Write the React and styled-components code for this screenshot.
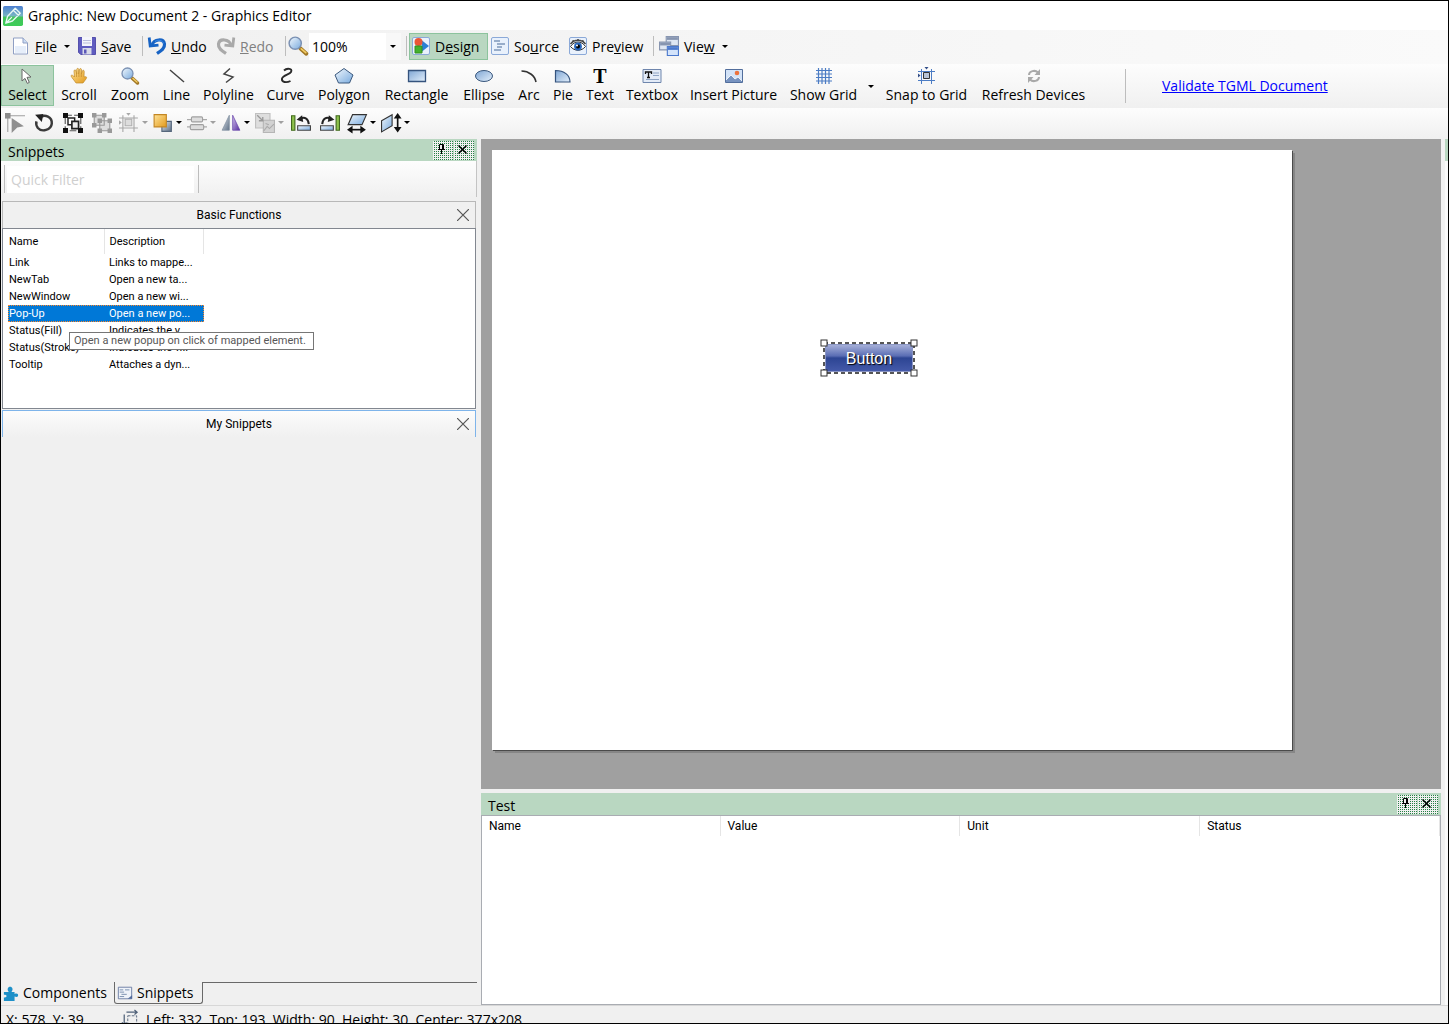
import { Fragment } from "react";
import styled, { createGlobalStyle, css } from "styled-components";

const GlobalStyle = createGlobalStyle`
  * {
    box-sizing: border-box;
  }

  body {
    margin: 0;
    background-color: #f0f0f0;
    font-family: "Open Sans", "Noto Sans", sans-serif;
    font-size: 14px;
    line-height: 20px;
    color: #000;
  }

  button,
  input,
  select {
    font: inherit;
    color: inherit;
    border: 0;
    margin: 0;
    padding: 0;
    border-radius: 0;
    background: none;
    outline: none;
  }

  h1,
  h2 {
    margin: 0;
    font: inherit;
  }

  table {
    border-collapse: collapse;
    border-spacing: 0;
  }
`;

const Window = styled.div`
  display: flex;
  flex-direction: column;
  height: 100vh;
  min-height: 600px;
  border: 1px solid #000;
  overflow: hidden;
`;

const TitleBar = styled.header`
  display: flex;
  align-items: center;
  gap: 5px;
  flex: none;
  height: 29px;
  padding-left: 2px;
  background-color: #fff;
`;

const MenuBar = styled.nav`
  display: flex;
  align-items: center;
  flex: none;
  height: 34px;
  padding: 0 0 2px 8px;
  background: linear-gradient(to right, #f0f0f0, #fafafa);
`;

const MenuButton = styled.button`
  display: flex;
  align-items: center;
  gap: 5px;
  flex: none;
  width: ${(props) => props.$width}px;
  height: 27px;
  padding: 0 3px;
  white-space: nowrap;

  &:disabled {
    color: #808080;
  }

  ${(props) =>
    props.$active &&
    css`
      background-color: #b9d7c1;
      box-shadow: inset 0 0 0 1px #8cc39d;
    `}
`;

const MenuLabel = styled.span`
  padding: 2px 2px 0 0;
`;

const Separator = styled.span`
  flex: none;
  width: 3px;
  height: ${(props) => props.$height || 20}px;
  border-left: 1px solid #bdbdbd;
`;

const Arrow = styled.span`
  flex: none;
  border: 3px solid transparent;
  border-top-color: ${(props) => (props.$muted ? "#a0a0a0" : "#000")};
  border-bottom: 0;
`;

const ZoomField = styled.label`
  display: flex;
  align-items: center;
  flex: none;
  gap: 1px;
  width: 118px;
`;

const ZoomBox = styled.span`
  display: flex;
  align-items: center;
  width: 92px;
  height: 27px;
  padding-right: 5px;
  background: linear-gradient(to right, #fff 77px, #f8f8f8 77px);
`;

const ZoomSelect = styled.select`
  appearance: none;
  flex: 1;
  min-width: 0;
  height: 27px;
  padding: 2px 0 0 3px;
`;

const ToolBar = styled.div`
  display: flex;
  align-items: center;
  flex: none;
  height: ${(props) => props.$height}px;
  background: linear-gradient(#fdfdfd, #f0f0f0);
`;

const ToolButton = styled.button`
  display: flex;
  flex-direction: column;
  align-items: center;
  flex: none;
  width: ${(props) => props.$width}px;
  height: 41px;
  padding-top: 2px;
  margin-bottom: 2px;
  white-space: nowrap;

  ${(props) =>
    props.$active &&
    css`
      background-color: #b9d7c1;
      box-shadow: inset 0 0 0 1px #8cc39d;
    `}
`;

const ArrowButton = styled.button`
  display: flex;
  justify-content: center;
  width: 14px;
`;

const ValidateArea = styled.div`
  display: flex;
  align-items: center;
  gap: 34px;
  margin-left: 33px;
`;

const ValidateLink = styled.a`
  color: #0000ff;
  white-space: nowrap;
`;

const IconButton = styled.button`
  display: flex;
  align-items: center;
  flex: none;
  gap: 3px;
  width: ${(props) => (props.$menu ? 34 : 29)}px;
  height: 29px;
  padding: 0 0 2px ${(props) => (props.$menu ? 2 : 4)}px;
`;

const Workspace = styled.main`
  display: flex;
  gap: 4px;
  flex: 1;
  min-height: 0;
`;

const Sidebar = styled.aside`
  display: flex;
  flex-direction: column;
  flex: none;
  width: 476px;
`;

const PanelHeader = styled.header`
  display: flex;
  align-items: center;
  flex: none;
  gap: 1px;
  height: 22px;
  padding: 0 3px 0 7px;
  background-color: #b9d7c1;
`;

const PanelTitle = styled.h2`
  flex: 1;
  padding-top: 4px;
`;

const PanelButton = styled.button`
  width: 20px;
  height: 19px;
  background: conic-gradient(#278045 25%, #f0f0f0 0) 0 0 / 2px 2px;

  svg {
    display: block;
  }
`;

const FilterBar = styled.div`
  display: flex;
  align-items: center;
  flex: none;
  height: 36px;
  padding-left: 3px;
  border-right: 1px solid #c4c4c4;
  background: linear-gradient(#fdfdfd, #f0f0f0);
`;

const FilterInput = styled.input`
  width: 187px;
  height: 27px;
  margin-right: 4px;
  padding-left: 4px;
  background-color: #fff;

  &::placeholder {
    color: #cfcfcf;
    opacity: 1;
  }
`;

const SnippetGroups = styled.div`
  flex: 1;
  padding: 4px 1px 0;
  font-family: Roboto, "Noto Sans", sans-serif;
  font-size: 11px;
  line-height: 17px;
`;

const GroupHeader = styled.header`
  display: flex;
  align-items: center;
  height: 27px;
  padding: 0 6px 0 18px;
  border: 1px solid ${(props) => (props.$focused ? "#7eb4ea" : "#b8b8b8")};
  border-bottom: 0;
  background: ${(props) =>
    props.$focused ? "linear-gradient(#fcfcfc, #f0f0f0)" : "#f0f0f0"};
`;

const GroupTitle = styled.h2`
  flex: 1;
  font-size: 12px;
  text-align: center;
`;

const CloseButton = styled.button`
  width: 12px;
  height: 12px;

  svg {
    display: block;
  }
`;

const SnippetList = styled.div`
  position: relative;
  height: 181px;
  margin-bottom: 1px;
  padding-left: 5px;
  border: 1px solid #828790;
  background-color: #fff;
`;

const SnippetTable = styled.table`
  table-layout: fixed;
  width: 196px;

  th {
    height: 25px;
    padding: 0 0 0 5px;
    border-right: 1px solid #e5e5e5;
    font-weight: normal;
    text-align: left;
  }

  th:first-child,
  td:first-child {
    width: 96px;
    padding-left: 1px;
  }
`;

const SnippetRow = styled.tr`
  height: 17px;

  td {
    padding: 0 0 0 5px;
    overflow: hidden;
    white-space: nowrap;
  }

  ${(props) =>
    props.$selected &&
    css`
      color: #fff;
      background-color: #0078d7;
      outline: 1px dotted #ff8728;
      outline-offset: -1px;
    `}
`;

const Tooltip = styled.div`
  position: absolute;
  top: 103px;
  left: 66px;
  height: 18px;
  padding: 0 7px 0 4px;
  border: 1px solid #767676;
  background-color: #fff;
  color: #575757;
  line-height: 16px;
  white-space: nowrap;
`;

const Tabs = styled.div`
  display: flex;
  flex: none;
  height: 23px;

  &::after {
    content: "";
    flex: 1;
    border-top: 1px solid #696969;
  }
`;

const Tab = styled.button`
  display: flex;
  align-items: center;
  gap: 4px;
  height: 22px;
  width: ${(props) => props.$width}px;
  padding-left: 2px;
  white-space: nowrap;

  ${(props) =>
    props.$active &&
    css`
      border: 1px solid #696969;
      border-top: 0;
      border-radius: 0 0 3px 3px;
    `}
`;

const Content = styled.section`
  display: flex;
  flex-direction: column;
  gap: 4px;
  flex: 1;
  min-width: 0;
`;

const Canvas = styled.div`
  flex: 1;
  min-height: 0;
  padding: 11px;
  background-color: #a0a0a0;
  overflow: hidden;
`;

const Page = styled.div`
  position: relative;
  width: 800px;
  height: 600px;
  background-color: #fff;
  box-shadow: 1px 1px 0 #4a4a4a, 3px 3px 0 #868686;
`;

const Shape = styled.div`
  position: absolute;
  top: 193px;
  left: 332px;
  width: 90px;
  height: 30px;
`;

const ShapeButton = styled.button`
  width: 90px;
  height: 30px;
  padding-top: 2px;
  border: 2px solid #8b96c5;
  background: linear-gradient(#a5afd8, #5a6db4 42%, #2d4593 50%, #4459a9);
  color: #fff;
  font-family: "Liberation Sans", sans-serif;
  font-size: 16px;
  line-height: 24px;
  text-shadow: 1px 1px 1px #000;
`;

const Selection = styled.svg`
  position: absolute;
  top: -4px;
  left: -4px;
`;

const TestPanel = styled.section`
  display: flex;
  flex-direction: column;
  flex: none;
  height: 212px;
`;

const TestGrid = styled.div`
  flex: 1;
  border: 1px solid #a9acb2;
  background-color: #fff;
`;

const TestTable = styled.table`
  table-layout: fixed;
  width: 100%;
  font-family: Roboto, "Noto Sans", sans-serif;
  font-size: 12px;
  line-height: 18px;

  th {
    height: 20px;
    padding: 0 7px;
    border-right: 1px solid #e5e5e5;
    font-weight: normal;
    text-align: left;
  }

  th:first-child {
    width: 238px;
  }
`;

const DockStrip = styled.div`
  flex: none;
  width: 3px;
  border-top: 22px solid #b9d7c1;
  background-color: #fafafa;
`;

const StatusBar = styled.footer`
  display: flex;
  flex: none;
  gap: 8px;
  height: 18px;
  padding: 4px 5px 0;
  border-top: 1px solid #d7d7d7;
  overflow: hidden;
  white-space: nowrap;
`;

const Coordinates = styled.span`
  width: 108px;
`;

const IconSvg = styled.svg`
  flex: none;
  display: block;
  overflow: visible;
`;

const Icon = ({ size = 18, children }) => (
  <IconSvg width={size} height={size} viewBox="0 0 18 18" fill="none" aria-hidden="true">
    {children}
  </IconSvg>
);

const GradientDefs = styled.svg`
  position: absolute;
`;

const Gradients = () => (
  <GradientDefs width="0" height="0" aria-hidden="true">
    <defs>
      <linearGradient id="blue" x1="0" y1="0" x2="1" y2="1">
        <stop stopColor="#f2f8fd" />
        <stop offset="1" stopColor="#78aade" />
      </linearGradient>
      <linearGradient id="steel" x1="0" y1="0" x2="1" y2="1">
        <stop stopColor="#7fa6d4" />
        <stop offset="1" stopColor="#e3effb" />
      </linearGradient>
      <linearGradient id="gold" x1="0" y1="0" x2="1" y2="1">
        <stop stopColor="#ffe49a" />
        <stop offset="1" stopColor="#e29a1c" />
      </linearGradient>
      <linearGradient id="slate" x1="0" y1="0" x2="1" y2="1">
        <stop stopColor="#e2e8ee" />
        <stop offset="1" stopColor="#5e7086" />
      </linearGradient>
      <linearGradient id="violet" x1="0" y1="0" x2="1" y2="1">
        <stop stopColor="#d5c4ef" />
        <stop offset="1" stopColor="#552c9c" />
      </linearGradient>
      <linearGradient id="app" x1="0" y1="0" x2="0" y2="1">
        <stop stopColor="#4b7ed0" />
        <stop offset="0.5" stopColor="#78b6c4" />
        <stop offset="0.55" stopColor="#43c35c" />
        <stop offset="1" stopColor="#3dcd58" />
      </linearGradient>
    </defs>
  </GradientDefs>
);

const AppIcon = () => (
  <Icon size={20}>
    <rect width="18" height="18" rx="1.5" fill="url(#app)" />
    <path
      d="M2.500 15.500l1.500-6 7-7.500 4.500 4.500-7 7-6 2zM2.500 15.500L8 10M9.500 4l4.500 4.500"
      stroke="#e8f8f4"
      strokeWidth="1.200"
      strokeLinejoin="round"
    />
  </Icon>
);

const FileIcon = () => (
  <Icon>
    <path d="M1.500 1h9.500l4.500 5v11h-14V1z" fill="#fff" stroke="#8f9fc4" />
    <path d="M3 9h11v7H3z" fill="#e6eefa" />
    <path d="M11 1v5h4.500" fill="#cbdcf4" stroke="#8f9fc4" />
  </Icon>
);

const SaveIcon = () => (
  <Icon>
    <path d="M.5.5h17v17H3l-2.500-2V.5z" fill="#5f5cc0" stroke="#5550ac" />
    <path d="M4 0h10v9H4z" fill="#f4f5fb" />
    <path d="M5 3.500h8M5 6h8" stroke="#b9bcda" />
    <path d="M4.500 11h9v6.500h-9z" fill="#d9dbe8" />
    <path d="M6 12.500h2.500v4H6z" fill="#5b57b8" />
  </Icon>
);

const UndoIcon = () => (
  <Icon>
    <path
      d="M4 8c2-6 11.500-7 12.500-1 .6 4.500-3.500 7-7.500 9.500"
      stroke="#1763c4"
      strokeWidth="3.200"
    />
    <path d="M1.200.5l1 8.500 8.300-.8" stroke="#1763c4" strokeWidth="2.800" />
    <path d="M7 4.500c3-2 7.500-1.500 8.500 2" stroke="#3f8be6" />
  </Icon>
);

const RedoIcon = () => (
  <Icon>
    <path
      d="M14 8C12 2 2.500 1 1.500 7c-.6 4.500 3.500 7 7.500 9.500"
      stroke="#a9a9a9"
      strokeWidth="3.200"
    />
    <path d="M16.800.5l-1 8.500-8.300-.8" stroke="#a9a9a9" strokeWidth="2.800" />
  </Icon>
);

const ZoomIcon = ({ size }) => (
  <Icon size={size}>
    <path d="M11 11l5.500 5" stroke="#a17724" strokeWidth="3.500" strokeLinecap="round" />
    <path d="M12 11.500l4 3.500" stroke="#f3cd65" strokeWidth="1.500" strokeLinecap="round" />
    <circle cx="6.500" cy="6.500" r="5.500" fill="url(#blue)" stroke="#7b91b3" strokeWidth="1.300" />
  </Icon>
);

const Frame = () => (
  <rect x="0.500" y="0.500" width="17" height="17" rx="1.500" fill="#e9f1fc" stroke="#8ba9d8" />
);

const DesignIcon = () => (
  <Icon>
    <Frame />
    <path d="M10 3.500l7 5.500-7 5.500z" fill="#2b7fd4" />
    <circle cx="6.500" cy="5" r="4" fill="#ea5636" />
    <path d="M3 9h7v7H3z" fill="#44b12d" stroke="#2f8f1d" />
  </Icon>
);

const SourceIcon = () => (
  <Icon>
    <Frame />
    <path d="M3 4h6M6 7h8M6 10h5M3 13h7" stroke="#7d97b9" strokeWidth="1.500" />
  </Icon>
);

const PreviewIcon = () => (
  <Icon>
    <Frame />
    <path d="M1.500 9.500c4-6 11-6 15 0-4 5-11 5-15 0z" fill="#fff" stroke="#333" />
    <circle cx="9" cy="9.500" r="3.900" fill="#2565bd" />
    <circle cx="9" cy="9.500" r="2" fill="#000" />
    <circle cx="8" cy="8.500" r="1" fill="#fff" />
    <path
      d="M1.500 7c4-5 11-5 15 0M3.500 3.500l1 1.500M9 2v2M14.500 3.500l-1 1.500"
      stroke="#444"
      strokeWidth="1.500"
    />
  </Icon>
);

const ViewIcon = () => (
  <Icon size={20}>
    <path d="M6.500.5h11v8h-11z" fill="#dfe7f3" stroke="#8795b0" />
    <path d="M7 1h10v2.500H7z" fill="#8795b0" />
    <path d="M.5 5.500h10v7H.5z" fill="#dfe7f3" stroke="#8795b0" />
    <path d="M1 6h9v2.500H1z" fill="#8795b0" />
    <path d="M7.500 9.500h10v8h-10z" fill="#d4e4fb" stroke="#4b79cd" />
    <path d="M8 10h9v2.500H8z" fill="#4b79cd" />
  </Icon>
);

const SelectIcon = () => (
  <Icon>
    <path
      d="M3 2l9 8-4 .4 2.300 5-2 1-2.300-5L3 14V2z"
      fill="#fff"
      stroke="#666"
      strokeLinejoin="round"
    />
  </Icon>
);

const HandIcon = () => (
  <Icon>
    <path
      d="M6 16C4 13 2 11 1 9c0-1.500 2-1 3.500 1L4 4c0-1.500 2-1.500 2 0l.7 3V2.500c0-1.500 2-1.500 2 0V7l.8-4.500c.2-1.400 2-1.200 2 .3L11.300 7l1-3c.5-1.300 2-.8 1.900.4L14 10c3-1 3 .5 2 2l-3 4H6z"
      fill="url(#gold)"
      stroke="#c08a28"
      strokeWidth="0.700"
    />
    <path d="M6.500 7v3M8.900 7v3M11.300 7v3" stroke="#b87f24" strokeWidth="0.600" />
  </Icon>
);

const LineIcon = () => (
  <Icon>
    <path d="M2 3l14 12" stroke="#444" strokeWidth="1.500" />
  </Icon>
);

const PolylineIcon = () => (
  <Icon>
    <path d="M10 1.500L4 7l9 3-7 5.500" stroke="#444" strokeWidth="1.500" />
  </Icon>
);

const CurveIcon = () => (
  <Icon>
    <path
      d="M7 3.500c3-3 9-2 7 1.500-1.500 2.500-8 3-9 6.500-.8 4 4.500 4.500 8.500 2.500"
      stroke="#2a2a2a"
      strokeWidth="1.900"
    />
  </Icon>
);

const PolygonIcon = () => (
  <Icon>
    <path d="M9 1.500l9 6.500-3.500 8h-11L0 8l9-6.500z" fill="url(#blue)" stroke="#3b587d" />
  </Icon>
);

const RectangleIcon = () => (
  <Icon>
    <path d="M.5 3.500h17v11H.5z" fill="url(#steel)" stroke="#35537d" strokeWidth="1.300" />
  </Icon>
);

const EllipseIcon = () => (
  <Icon>
    <ellipse cx="9" cy="9" rx="8.500" ry="5.500" fill="url(#steel)" stroke="#3b587d" />
  </Icon>
);

const ArcIcon = () => (
  <Icon>
    <path d="M1.500 4C9 4 15 9 16 15" stroke="#333" strokeWidth="1.600" />
  </Icon>
);

const PieIcon = () => (
  <Icon>
    <path
      d="M1.500 3.500v11.500H16c0-7-6-11.500-14.500-11.500z"
      fill="url(#steel)"
      stroke="#35537d"
      strokeWidth="1.200"
    />
  </Icon>
);

const Letter = styled.span`
  height: 18px;
  font-family: "Liberation Serif", serif;
  font-size: 20px;
  font-weight: bold;
  line-height: 18px;
`;

const TextboxIcon = () => (
  <Icon>
    <path d="M0 2.500h18v13H0z" fill="#e3ebf7" stroke="#6f86ad" />
    <path d="M10 6h6M10 8.500h6M3 12.500h13" stroke="#8fa4c4" />
    <path d="M2.500 7V5h6v2M5.500 5v5.500M4 10.500h3" stroke="#111" strokeWidth="1.300" />
  </Icon>
);

const PictureIcon = () => (
  <Icon>
    <path d="M.5 2.500h17v13H.5z" fill="#d3e3f8" stroke="#526e9c" />
    <circle cx="12" cy="6" r="2.300" fill="#ed733e" />
    <path d="M1 13l5-5 4 4 3-2 4 4v1H1z" fill="#7793c0" />
    <path d="M1 13l5-5 4 4 3-2 4 4" stroke="#fff" strokeWidth="0.800" />
  </Icon>
);

const GridIcon = () => (
  <Icon>
    <path
      d="M3.500 1v16M7 1v16M10.500 1v16M14 1v16M1 3.500h16M1 7h16M1 10.500h16M1 14h16"
      stroke="#4c7cc4"
      strokeWidth="1.200"
    />
  </Icon>
);

const SnapIcon = ({ muted, size }) => (
  <Icon size={size}>
    <path d="M3.500 2v15M13.500 2v15M0 4.500h17M0 13.500h17" stroke={muted ? "#a8a8a8" : "#4c7cc4"} />
    <path
      d="M5.500 5.500h6v6h-6z"
      fill={muted ? "#ddd" : "#b8c3d4"}
      stroke={muted ? "#b0b0b0" : "#333"}
    />
    <path d="M6.500 0h4l-2 2.500zM0 6.500v4L2.500 8.500z" fill={muted ? "#a8a8a8" : "#34508a"} />
  </Icon>
);

const RefreshIcon = () => (
  <Icon>
    <path d="M4 8c0-4 6-5.500 9-2.500M14 10c0 4-6 5.500-9 2.500" stroke="#a9a9a9" strokeWidth="2" />
    <path d="M15 2v6H9.500zM3 16v-6h5.500z" fill="#a9a9a9" />
  </Icon>
);

const NodeIcon = () => (
  <Icon size={20}>
    <path d="M4 2.500h14M2.500 4v13" stroke="#a0a0a0" />
    <path d="M0 0h5v5H0z" fill="#8c8c8c" />
    <path d="M6 4.500l11 7.500-6 1-5 5V4.500z" fill="#8f8f8f" />
  </Icon>
);

const RotateIcon = () => (
  <Icon size={20}>
    <path
      d="M5 4c5-3.500 11.500-.5 11 5.500-.6 6-9 8-12.500 4-1.500-2-1.800-4-1.300-6"
      stroke="#3a3a3a"
      strokeWidth="2.200"
    />
    <path d="M1 1.500L8.500 1 7 8z" fill="#222" />
  </Icon>
);

const GroupIcon = () => (
  <Icon size={20}>
    <path d="M2 2h14v14H2z" stroke="#555" strokeDasharray="6 2" />
    <path d="M4.500 4.500h6v6h-6z" fill="#fff" stroke="#222" strokeWidth="1.300" />
    <path d="M8 7.500h6v6.500H8z" fill="#eee" stroke="#222" strokeWidth="1.500" />
    <path d="M0 0h4.500v4.500H0zM13.500 0H18v4.500h-4.500zM0 13.500h4.500V18H0zM13.500 13.500H18V18h-4.500z" fill="#111" />
  </Icon>
);

const UngroupIcon = () => (
  <Icon size={20}>
    <path d="M2 2h9v9H2zM7 7h9v9H7z" fill="#ddd" stroke="#999" />
    <path
      d="M0 0h4v4H0zM9 0h4v4H9zM0 9h4v4H0zM5 5h4v4H5zM14 5h4v4h-4zM5 14h4v4H5zM14 14h4v4h-4z"
      fill="#999"
    />
  </Icon>
);

const OrderIcon = () => (
  <Icon size={20}>
    <path d="M8 7.500h8.500v9H8z" fill="url(#slate)" stroke="#56677c" />
    <path d="M1 1.500h11v11H1z" fill="url(#gold)" stroke="#c38623" />
  </Icon>
);

const AlignIcon = () => (
  <Icon size={20}>
    <path d="M0 6h18M0 12.500h18" stroke="#aaa" />
    <rect x="4" y="3.500" width="10" height="4.500" rx="1" fill="#ddd" stroke="#a0a0a0" />
    <rect x="3" y="10.500" width="12" height="4.500" rx="1" fill="#ddd" stroke="#a0a0a0" />
  </Icon>
);

const FlipIcon = () => (
  <Icon size={20}>
    <path d="M7.500 2v13.500H1z" fill="url(#slate)" stroke="#8492a2" strokeWidth="0.700" />
    <path d="M10.500 2v13.500H17z" fill="url(#violet)" stroke="#6c4aad" strokeWidth="0.700" />
  </Icon>
);

const ConvertIcon = () => (
  <Icon size={20}>
    <path d="M.5.5h13v13H.5z" fill="#dedede" stroke="#c0c0c0" />
    <path d="M7.500 6.500h10v11h-10z" fill="#d2d2d2" stroke="#b5b5b5" />
    <path d="M2 2l5 5M7 3.500V7H3.500" stroke="#999" strokeWidth="1.200" />
    <path d="M8 16l3-4 2 2 4-4M9.500 9.500l3 1" stroke="#aaa" />
  </Icon>
);

const RotateLeftIcon = () => (
  <Icon size={20}>
    <path d="M.5 2.500h3v13h-3z" fill="#8dc24c" stroke="#40691d" />
    <path d="M6 11.500h11.500v4H6z" fill="url(#blue)" stroke="#444" />
    <path d="M8 5.500c4-2.500 7.500-1 8 4.500" stroke="#222" strokeWidth="1.800" />
    <path d="M5 6l5-4 1 6z" fill="#222" />
  </Icon>
);

const RotateRightIcon = () => (
  <Icon size={20}>
    <path d="M14.500 2.500h3v13h-3z" fill="#8dc24c" stroke="#40691d" />
    <path d="M.5 11.500H12v4H.5z" fill="url(#blue)" stroke="#444" />
    <path d="M10 5.500C6 3 2.500 4.500 2 10" stroke="#222" strokeWidth="1.800" />
    <path d="M13 6L8 2 7 8z" fill="#222" />
  </Icon>
);

const SkewXIcon = () => (
  <Icon size={20}>
    <path d="M5 1.500h12.500l-4 9H1z" fill="url(#blue)" stroke="#333" />
    <path d="M3 15h11" stroke="#111" strokeWidth="1.500" />
    <path d="M0 15l5-3.500v7zM17 15l-5-3.500v7z" fill="#111" />
  </Icon>
);

const SkewYIcon = () => (
  <Icon size={20}>
    <path d="M.5 7L10 1.500v10L.5 17z" fill="url(#blue)" stroke="#333" />
    <path d="M15 3v11" stroke="#111" strokeWidth="1.500" />
    <path d="M15 0l3.500 5h-7zM15 17.500l3.500-5h-7z" fill="#111" />
  </Icon>
);

const PuzzleIcon = () => (
  <Icon size={16}>
    <path
      d="M1 8h5.500C4 5 5.500 2 8 2s4 3 1.500 6H13v2c3-1 4 0 4 1.500S16 14 13 13v5H1v-4c2 .5 3-.5 3-1.500S3 11 1 11V8z"
      fill="#1e90c8"
    />
  </Icon>
);

const SnippetIcon = () => (
  <Icon size={16}>
    <path d="M1.500 2.500h15v13h-15z" fill="#eef2f9" stroke="#6678a0" />
    <path d="M3 5.500h4M9 5.500h5M3 8h5M5 10.500h6M3 13h5" stroke="#7187a8" />
    <path d="M12 15.500l5-4v4z" fill="#506a9c" />
  </Icon>
);

const BoundsIcon = () => (
  <Icon size={16}>
    <path
      d="M5 2.500h11M2.500 5v12M14 0l3 2.500L14 5M0 14l2.500 3L5 14"
      stroke="#4f6078"
      strokeWidth="1.400"
    />
    <path d="M6.500 6.500h10v11h-10z" stroke="#4f6078" strokeDasharray="3 1.500" />
  </Icon>
);

const PinGlyph = () => (
  <svg width="20" height="19" viewBox="0 0 20 19" aria-hidden="true">
    <path d="M6 3h6v7H6z" fill="#f0f0f0" />
    <path d="M6.500 8V3.500h4V8M9.500 3v5M5 8.500h7M8.500 9v4" fill="none" stroke="#000" />
  </svg>
);

const DockClose = () => (
  <svg width="20" height="19" viewBox="0 0 20 19" aria-hidden="true">
    <path d="M4.500 4.500l8 8M12.500 4.500l-8 8" stroke="#000" strokeWidth="1.500" />
  </svg>
);

const CloseGlyph = () => (
  <svg width="12" height="12" viewBox="0 0 12 12" aria-hidden="true">
    <path d="M0 0l12 12M12 0L0 12" stroke="#555" strokeWidth="1.200" />
  </svg>
);

const tools = [
  { label: "Select", icon: <SelectIcon />, width: 53, active: true },
  { label: "Scroll", icon: <HandIcon />, width: 50 },
  { label: "Zoom", icon: <ZoomIcon />, width: 52 },
  { label: "Line", icon: <LineIcon />, width: 41 },
  { label: "Polyline", icon: <PolylineIcon />, width: 63 },
  { label: "Curve", icon: <CurveIcon />, width: 51 },
  { label: "Polygon", icon: <PolygonIcon />, width: 66 },
  { label: "Rectangle", icon: <RectangleIcon />, width: 79 },
  { label: "Ellipse", icon: <EllipseIcon />, width: 56 },
  { label: "Arc", icon: <ArcIcon />, width: 34 },
  { label: "Pie", icon: <PieIcon />, width: 34 },
  { label: "Text", icon: <Letter aria-hidden="true">T</Letter>, width: 40 },
  { label: "Textbox", icon: <TextboxIcon />, width: 64 },
  { label: "Insert Picture", icon: <PictureIcon />, width: 99 },
  { label: "Show Grid", icon: <GridIcon />, width: 81, menu: true },
  { label: "Snap to Grid", icon: <SnapIcon />, width: 97 },
  { label: "Refresh Devices", icon: <RefreshIcon />, width: 117 },
];

const actions = [
  { label: "Edit points", icon: <NodeIcon />, disabled: true },
  { label: "Rotate", icon: <RotateIcon /> },
  { label: "Group", icon: <GroupIcon /> },
  { label: "Ungroup", icon: <UngroupIcon />, disabled: true },
  { label: "Snap", icon: <SnapIcon muted size={20} />, menu: true, disabled: true },
  { label: "Order", icon: <OrderIcon />, menu: true },
  { label: "Align", icon: <AlignIcon />, menu: true, disabled: true },
  { label: "Flip", icon: <FlipIcon />, menu: true },
  { label: "Convert", icon: <ConvertIcon />, menu: true, disabled: true },
  { label: "Rotate left", icon: <RotateLeftIcon /> },
  { label: "Rotate right", icon: <RotateRightIcon /> },
  { label: "Skew horizontally", icon: <SkewXIcon />, menu: true },
  { label: "Skew vertically", icon: <SkewYIcon />, menu: true },
];

const snippets = [
  { name: "Link", description: "Links to mappe..." },
  { name: "NewTab", description: "Open a new ta..." },
  { name: "NewWindow", description: "Open a new wi..." },
  { name: "Pop-Up", description: "Open a new po..." },
  { name: "Status(Fill)", description: "Indicates the v..." },
  { name: "Status(Stroke)", description: "Indicates the v..." },
  { name: "Tooltip", description: "Attaches a dyn..." },
];

const handles = [
  [1, 1],
  [91, 1],
  [1, 31],
  [91, 31],
];

const PanelButtons = () => (
  <>
    <PanelButton aria-label="Auto hide">
      <PinGlyph />
    </PanelButton>
    <PanelButton aria-label="Close panel">
      <DockClose />
    </PanelButton>
  </>
);

const MainMenu = () => (
  <MenuBar>
    <MenuButton $width={66}>
      <FileIcon />
      <MenuLabel>
        <u>F</u>ile
      </MenuLabel>
      <Arrow />
    </MenuButton>
    <MenuButton $width={67}>
      <SaveIcon />
      <MenuLabel>
        <u>S</u>ave
      </MenuLabel>
    </MenuButton>
    <Separator />
    <MenuButton $width={69}>
      <UndoIcon />
      <MenuLabel>
        <u>U</u>ndo
      </MenuLabel>
    </MenuButton>
    <MenuButton $width={71} disabled>
      <RedoIcon />
      <MenuLabel>
        <u>R</u>edo
      </MenuLabel>
    </MenuButton>
    <Separator />
    <ZoomField>
      <ZoomIcon size={20} />
      <ZoomBox>
        <ZoomSelect defaultValue="100%" aria-label="Zoom level">
          <option>100%</option>
        </ZoomSelect>
        <Arrow />
      </ZoomBox>
    </ZoomField>
    <Separator />
    <MenuButton $width={79} $active>
      <DesignIcon />
      <MenuLabel>
        D<u>e</u>sign
      </MenuLabel>
    </MenuButton>
    <MenuButton $width={78}>
      <SourceIcon />
      <MenuLabel>
        So<u>u</u>rce
      </MenuLabel>
    </MenuButton>
    <MenuButton $width={87}>
      <PreviewIcon />
      <MenuLabel>
        Pre<u>v</u>iew
      </MenuLabel>
    </MenuButton>
    <Separator />
    <MenuButton $width={76}>
      <ViewIcon />
      <MenuLabel>
        Vie<u>w</u>
      </MenuLabel>
      <Arrow />
    </MenuButton>
  </MenuBar>
);

const DrawingTools = () => (
  <ToolBar $height={44}>
    {tools.map((tool) => (
      <Fragment key={tool.label}>
        <ToolButton $width={tool.width} $active={tool.active}>
          {tool.icon}
          {tool.label}
        </ToolButton>
        {tool.menu && (
          <ArrowButton aria-label="Grid options">
            <Arrow />
          </ArrowButton>
        )}
      </Fragment>
    ))}
    <ValidateArea>
      <Separator $height={34} />
      <ValidateLink href="#validate">Validate TGML Document</ValidateLink>
    </ValidateArea>
  </ToolBar>
);

const EditActions = () => (
  <ToolBar $height={31}>
    {actions.map((action) => (
      <IconButton
        key={action.label}
        aria-label={action.label}
        $menu={action.menu}
        disabled={action.disabled}
      >
        {action.icon}
        {action.menu && <Arrow $muted={action.disabled} />}
      </IconButton>
    ))}
  </ToolBar>
);

const SnippetsPanel = () => (
  <Sidebar>
    <PanelHeader>
      <PanelTitle>Snippets</PanelTitle>
      <PanelButtons />
    </PanelHeader>
    <FilterBar>
      <Separator $height={28} />
      <FilterInput placeholder="Quick Filter" aria-label="Quick Filter" />
      <Separator $height={28} />
    </FilterBar>
    <SnippetGroups>
      <GroupHeader>
        <GroupTitle>Basic Functions</GroupTitle>
        <CloseButton aria-label="Close Basic Functions">
          <CloseGlyph />
        </CloseButton>
      </GroupHeader>
      <SnippetList>
        <SnippetTable>
          <thead>
            <tr>
              <th>Name</th>
              <th>Description</th>
            </tr>
          </thead>
          <tbody>
            {snippets.map((snippet) => (
              <SnippetRow key={snippet.name} $selected={snippet.name === "Pop-Up"}>
                <td>{snippet.name}</td>
                <td>{snippet.description}</td>
              </SnippetRow>
            ))}
          </tbody>
        </SnippetTable>
        <Tooltip role="tooltip">Open a new popup on click of mapped element.</Tooltip>
      </SnippetList>
      <GroupHeader $focused>
        <GroupTitle>My Snippets</GroupTitle>
        <CloseButton aria-label="Close My Snippets">
          <CloseGlyph />
        </CloseButton>
      </GroupHeader>
    </SnippetGroups>
    <Tabs>
      <Tab $width={113}>
        <PuzzleIcon />
        Components
      </Tab>
      <Tab $width={89} $active>
        <SnippetIcon />
        Snippets
      </Tab>
    </Tabs>
  </Sidebar>
);

const DesignCanvas = () => (
  <Canvas>
    <Page>
      <Shape>
        <ShapeButton>Button</ShapeButton>
        <Selection width="98" height="38" viewBox="0 0 98 38" aria-hidden="true">
          <rect x="4" y="4" width="90" height="30" fill="none" stroke="#fff" strokeWidth="2" />
          <rect
            x="4"
            y="4"
            width="90"
            height="30"
            fill="none"
            stroke="#555"
            strokeWidth="2"
            strokeDasharray="4 3"
          />
          {handles.map(([x, y]) => (
            <rect key={`${x}-${y}`} x={x} y={y} width="6" height="6" fill="#fff" stroke="#333" />
          ))}
        </Selection>
      </Shape>
    </Page>
  </Canvas>
);

const App = () => {
  return (
    <Window>
      <GlobalStyle />
      <Gradients />
      <TitleBar>
        <AppIcon />
        <h1>Graphic: New Document 2 - Graphics Editor</h1>
      </TitleBar>
      <MainMenu />
      <DrawingTools />
      <EditActions />
      <Workspace>
        <SnippetsPanel />
        <Content>
          <DesignCanvas />
          <TestPanel>
            <PanelHeader>
              <PanelTitle>Test</PanelTitle>
              <PanelButtons />
            </PanelHeader>
            <TestGrid>
              <TestTable>
                <thead>
                  <tr>
                    <th>Name</th>
                    <th>Value</th>
                    <th>Unit</th>
                    <th>Status</th>
                  </tr>
                </thead>
              </TestTable>
            </TestGrid>
          </TestPanel>
        </Content>
        <DockStrip />
      </Workspace>
      <StatusBar>
        <Coordinates>X: 578&nbsp; Y: 39</Coordinates>
        <BoundsIcon />
        <span>Left: 332&nbsp; Top: 193&nbsp; Width: 90&nbsp; Height: 30&nbsp; Center: 377x208</span>
      </StatusBar>
    </Window>
  );
};

export default App;
